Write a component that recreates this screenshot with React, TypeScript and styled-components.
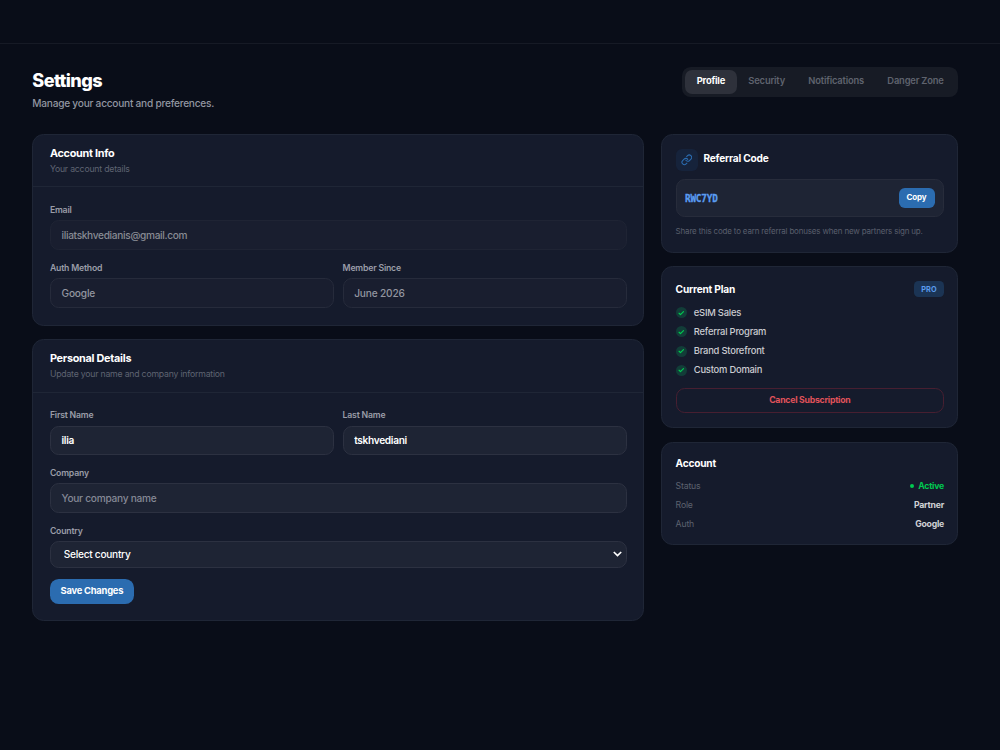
import React from "react";
import styled, { createGlobalStyle } from "styled-components";
import { Link, Check } from "lucide-react";

const GlobalStyle = createGlobalStyle`
  * { box-sizing: border-box; }
  body {
    margin: 0;
    background: #090d18;
    color: #fff;
    font-family: Inter, "Liberation Sans", sans-serif;
  }
  button, input, select { font-family: inherit; margin: 0; }
`;

const Page = styled.div`
  min-height: 750px;
`;

const TopBar = styled.header`
  height: 44px;
  border-bottom: 1px solid #161a25;
`;

const Main = styled.main`
  padding: 22.5px 41.6px 0 32.3px;
`;

const PageHead = styled.div`
  display: flex;
  justify-content: space-between;
  align-items: flex-start;
  height: 67.5px;
`;

const Title = styled.h1`
  margin: 1px 0 0;
  font-size: 18.1px;
  line-height: 24px;
  font-weight: 800;
  letter-spacing: -0.6px;
`;

const Subtitle = styled.p`
  margin: 4.5px 0 0;
  font-size: 10.13px;
  line-height: 15px;
  letter-spacing: -0.24px;
  font-weight: 450;
  color: #9296a1;
`;

const Tabs = styled.nav`
  display: flex;
  padding: 3px;
  height: 30px;
  border-radius: 8.7px;
  background: #171b25;
`;

const Tab = styled.button<{ $active?: boolean }>`
  border: 0;
  padding: 0 11.7px 2px;
  border-radius: 7.2px;
  font-size: 9.4px;
  letter-spacing: ${(p) => (p.$active ? -0.24 : -0.19)}px;
  font-weight: ${(p) => (p.$active ? 700 : 600)};
  color: ${(p) => (p.$active ? "#fff" : "#5f636e")};
  background: ${(p) => (p.$active ? "#2e313b" : "transparent")};
`;

const Columns = styled.div`
  display: grid;
  grid-template-columns: 611.7px 297.6px;
  justify-content: space-between;
  align-items: start;
`;

const Stack = styled.div`
  display: flex;
  flex-direction: column;
  gap: 13.5px;
`;

const Card = styled.section<{ $height: number }>`
  height: ${(p) => p.$height}px;
  border: 1px solid #1f2636;
  border-radius: 11.6px;
  background: #151b2c;
`;

const CardHead = styled.div`
  height: 52.4px;
  padding: 10px 16.6px 0;
  border-bottom: 1px solid #1f2636;
`;

const CardTitle = styled.h2`
  margin: 0;
  font-size: 10.85px;
  line-height: 16px;
  font-weight: 750;
  letter-spacing: -0.27px;
`;

const SideTitle = styled(CardTitle)`
  font-size: 10.13px;
  letter-spacing: -0.2px;
`;

const CardNote = styled.p`
  margin: 2px 0 0;
  font-size: 8.7px;
  line-height: 13px;
  letter-spacing: -0.2px;
  color: #5f6472;
`;

const CardBody = styled.div`
  display: flex;
  flex-direction: column;
  align-items: stretch;
  gap: 11.8px;
  padding: 16.8px 16.4px 0 16.6px;
`;

const FieldRow = styled.div`
  display: grid;
  grid-template-columns: 1fr 1fr;
  gap: 8.7px;
`;

const Field = styled.label`
  display: flex;
  flex-direction: column;
  gap: 4.2px;
  font-size: 8.7px;
  line-height: 12px;
  font-weight: 600;
  letter-spacing: -0.19px;
  color: #9a9da8;
`;

const Input = styled.input<{ $tone?: "muted" | "disabled" }>`
  width: 100%;
  height: 29.8px;
  padding: 0 10.6px 1px;
  border: 1px solid ${(p) => (p.$tone === "disabled" ? "#1f2434" : p.$tone === "muted" ? "#262b3b" : "#2c3141")};
  border-radius: 8.7px;
  outline: 0;
  background: ${(p) => (p.$tone ? "#191e2f" : "#1e2434")};
  color: ${(p) => (p.$tone === "disabled" ? "#888b94" : p.$tone === "muted" ? "#9396a0" : "#fff")};
  font-size: 10.13px;
  font-weight: ${(p) => (p.$tone ? 500 : 600)};
  letter-spacing: ${(p) => (p.$tone === "muted" ? -0.17 : -0.32)}px;
  &::placeholder { color: #858996; opacity: 1; font-weight: 450; letter-spacing: -0.25px; }
`;

const SelectBox = styled.span`
  display: flex;
  align-items: center;
  height: 27px;
  padding: 0 4px 1px 12.9px;
  border: 1px solid #2c3141;
  border-radius: 8.7px;
  background: #1e2434;
`;

const Select = styled.select`
  flex: 1;
  appearance: none;
  border: 0;
  padding: 0;
  background: transparent;
  color: #fff;
  font-size: 10.13px;
  font-weight: 500;
  letter-spacing: -0.27px;
`;

const SaveButton = styled.button`
  align-self: flex-start;
  width: 84px;
  height: 24.6px;
  margin-top: -0.6px;
  padding: 0 0 2px;
  border: 0;
  border-radius: 8.7px;
  background: #2b6cb0;
  color: #fff;
  font-size: 9.4px;
  font-weight: 700;
  letter-spacing: -0.24px;
  white-space: nowrap;
`;

const SideCard = styled(Card)`
  padding: 14px 13.4px 0 13.8px;
`;

const CodeHead = styled.div`
  display: flex;
  align-items: center;
  gap: 5.8px;
  height: 22px;
`;

const IconTile = styled.span`
  display: grid;
  place-items: center;
  width: 22px;
  height: 22px;
  border-radius: 5.8px;
  background: #16233b;
  color: #2b6cb0;
`;

const CodeLabel = styled(SideTitle)`
  margin-top: -3.4px;
`;

const CodeBox = styled.div`
  display: flex;
  align-items: center;
  justify-content: space-between;
  height: 38px;
  margin-top: 7.6px;
  padding: 0 8.5px;
  border: 1px solid #272c3b;
  border-radius: 8.7px;
  background: #1e2434;
`;

const Code = styled.code`
  font-family: "DejaVu Sans Mono", "Liberation Mono", monospace;
  font-size: 10.4px;
  font-weight: 700;
  letter-spacing: -0.22px;
  color: #5a9cf2;
  -webkit-text-stroke: 0.3px #5a9cf2;
  transform: scaleX(0.9);
  transform-origin: left;
`;

const CopyButton = styled.button`
  width: 36px;
  height: 20px;
  padding: 0 0 1px;
  border: 0;
  border-radius: 5.8px;
  background: #2b6cb0;
  color: #fff;
  font-size: 8px;
  font-weight: 700;
  letter-spacing: -0.15px;
`;

const Hint = styled.p`
  margin: 8px 0 0;
  font-size: 7.96px;
  line-height: 12px;
  letter-spacing: -0.16px;
  color: #5a5f6d;
  white-space: nowrap;
`;

const PlanHead = styled.div`
  display: flex;
  align-items: center;
  justify-content: space-between;
  height: 17px;
  margin-top: -0.6px;
`;

const Badge = styled.span`
  width: 30px;
  height: 16.6px;
  border-radius: 4.5px;
  background: #1b3454;
  color: #5a9bee;
  font-size: 7.3px;
  line-height: 17px;
  font-weight: 700;
  text-align: center;
  letter-spacing: 0.2px;
`;

const Features = styled.ul`
  margin: 5px 0 0;
  padding: 0;
  list-style: none;
`;

const Feature = styled.li`
  display: flex;
  align-items: center;
  gap: 7.2px;
  height: 19.1px;
  font-size: 9.4px;
  font-weight: 500;
  letter-spacing: -0.22px;
  color: #cbccd1;
`;

const Tick = styled.span`
  display: grid;
  place-items: center;
  width: 11px;
  height: 11px;
  margin-top: 1.5px;
  border-radius: 50%;
  background: #123d38;
  color: #00c950;
`;

const CancelButton = styled.button`
  width: 100%;
  height: 25px;
  margin-top: 9px;
  padding: 0 0 1px;
  border: 1px solid #471f31;
  border-radius: 8.7px;
  background: transparent;
  color: #e0525a;
  font-size: 8.7px;
  font-weight: 700;
  letter-spacing: -0.24px;
`;

const AccountTitle = styled(SideTitle)`
  margin-top: -1.6px;
`;

const Facts = styled.dl`
  margin: 5.4px 0 0;
`;

const Fact = styled.div`
  display: flex;
  align-items: center;
  justify-content: space-between;
  height: 19.1px;
  font-size: 8.7px;
  letter-spacing: -0.18px;
`;

const FactName = styled.dt`
  color: #5d626f;
`;

const FactValue = styled.dd<{ $online?: boolean }>`
  display: flex;
  align-items: center;
  gap: 4px;
  margin: 0;
  font-weight: 700;
  letter-spacing: -0.22px;
  color: ${(p) => (p.$online ? "#00c950" : "#d0d1d5")};
`;

const Dot = styled.i`
  width: 4.4px;
  height: 4.4px;
  border-radius: 50%;
  background: #00c950;
`;

const features = ["eSIM Sales", "Referral Program", "Brand Storefront", "Custom Domain"];

export default function App() {
  return (
    <Page>
      <GlobalStyle />
      <TopBar />
      <Main>
        <PageHead>
          <div>
            <Title>Settings</Title>
            <Subtitle>Manage your account and preferences.</Subtitle>
          </div>
          <Tabs>
            <Tab $active>Profile</Tab>
            <Tab>Security</Tab>
            <Tab>Notifications</Tab>
            <Tab>Danger Zone</Tab>
          </Tabs>
        </PageHead>
        <Columns>
          <Stack>
            <Card $height={191.7}>
              <CardHead>
                <CardTitle>Account Info</CardTitle>
                <CardNote>Your account details</CardNote>
              </CardHead>
              <CardBody>
                <Field>
                  Email
                  <Input $tone="disabled" readOnly value="iliatskhvedianis@gmail.com" />
                </Field>
                <FieldRow>
                  <Field>
                    Auth Method
                    <Input $tone="muted" readOnly value="Google" />
                  </Field>
                  <Field>
                    Member Since
                    <Input $tone="muted" readOnly value="June 2026" />
                  </Field>
                </FieldRow>
              </CardBody>
            </Card>
            <Card $height={281.8}>
              <CardHead>
                <CardTitle>Personal Details</CardTitle>
                <CardNote>Update your name and company information</CardNote>
              </CardHead>
              <CardBody>
                <FieldRow>
                  <Field>
                    First Name
                    <Input defaultValue="ilia" />
                  </Field>
                  <Field>
                    Last Name
                    <Input defaultValue="tskhvediani" />
                  </Field>
                </FieldRow>
                <Field>
                  Company
                  <Input placeholder="Your company name" />
                </Field>
                <Field>
                  Country
                  <SelectBox>
                    <Select defaultValue="">
                      <option value="">Select country</option>
                    </Select>
                    <svg width="9" height="6" viewBox="0 0 9 6" fill="none" stroke="#fff" strokeWidth="1.7">
                      <path d="M0.8 1 L4.5 4.5 L8.2 1" />
                    </svg>
                  </SelectBox>
                </Field>
                <SaveButton>Save Changes</SaveButton>
              </CardBody>
            </Card>
          </Stack>
          <Stack>
            <SideCard $height={118.7}>
              <CodeHead>
                <IconTile>
                  <Link size={11.6} strokeWidth={2.2} />
                </IconTile>
                <CodeLabel>Referral Code</CodeLabel>
              </CodeHead>
              <CodeBox>
                <Code>RWC7YD</Code>
                <CopyButton>Copy</CopyButton>
              </CodeBox>
              <Hint>Share this code to earn referral bonuses when new partners sign up.</Hint>
            </SideCard>
            <SideCard $height={162}>
              <PlanHead>
                <SideTitle>Current Plan</SideTitle>
                <Badge>PRO</Badge>
              </PlanHead>
              <Features>
                {features.map((name) => (
                  <Feature key={name}>
                    <Tick>
                      <Check size={6.6} strokeWidth={4.4} />
                    </Tick>
                    {name}
                  </Feature>
                ))}
              </Features>
              <CancelButton>Cancel Subscription</CancelButton>
            </SideCard>
            <SideCard $height={103.7}>
              <AccountTitle>Account</AccountTitle>
              <Facts>
                <Fact>
                  <FactName>Status</FactName>
                  <FactValue $online>
                    <Dot />
                    Active
                  </FactValue>
                </Fact>
                <Fact>
                  <FactName>Role</FactName>
                  <FactValue>Partner</FactValue>
                </Fact>
                <Fact>
                  <FactName>Auth</FactName>
                  <FactValue>Google</FactValue>
                </Fact>
              </Facts>
            </SideCard>
          </Stack>
        </Columns>
      </Main>
    </Page>
  );
}
